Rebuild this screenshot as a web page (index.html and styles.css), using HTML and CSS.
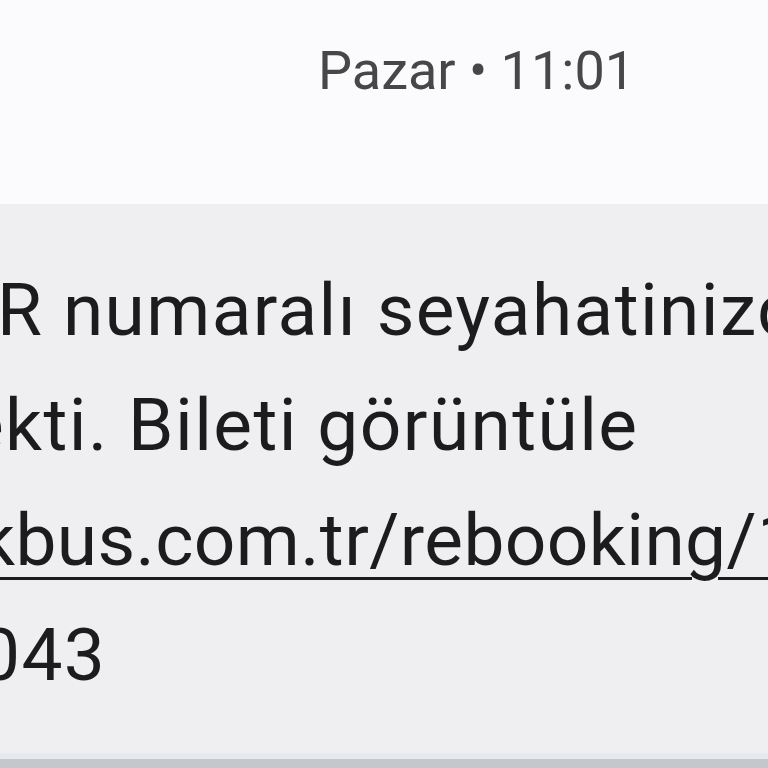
FILE: index.html
```html
<!DOCTYPE html>
<html lang="tr">
<head>
<meta charset="utf-8">
<link rel="stylesheet" href="styles.css">
</head>
<body>
<div class="screen">
  <header class="stamp-row">
    <span class="stamp">Pazar • 11:01</span>
  </header>
  <section class="bubble">
    <div class="line l1">R numaralı seyahatinizde</div>
    <div class="line l2">ekti. Bileti görüntüle</div>
    <div class="line l3"><span class="link">kbus.com.tr/rebooking/1d8f7a2c9b4e6</span></div>
    <div class="line l4">043</div>
  </section>
  <div class="edge"></div>
  <div class="divider"></div>
</div>
</body>
</html>
```
FILE: styles.css
```css
html, body {
  margin: 0;
  padding: 0;
  background: #fbfbfd;
}
.screen {
  width: 768px;
  height: 768px;
  overflow: hidden;
  display: flex;
  flex-direction: column;
  font-family: Roboto, "Noto Sans", sans-serif;
}
.stamp-row {
  height: 204px;
  box-sizing: border-box;
  padding: 36px 0 0 318px;
  flex: none;
}
.stamp {
  font-size: 54px;
  line-height: 70px;
  color: #474747;
  white-space: nowrap;
}
.bubble {
  flex: none;
  height: 549px;
  box-sizing: border-box;
  padding-top: 49px;
  background: #efeff2;
  color: #1c1c1e;
  font-size: 73px;
  letter-spacing: 1.4px;
  line-height: 115px;
  overflow: hidden;
}
.line {
  white-space: nowrap;
}
.l1 { margin-left: -3px; }
.l2 { margin-left: -35px; }
.l3 { margin-left: -22px; letter-spacing: 0.4px; }
.l4 { margin-left: -21px; }
.link {
  text-decoration: underline;
  text-decoration-thickness: 3px;
  text-underline-offset: 12px;
}
.edge {
  flex: none;
  height: 6px;
  background: #e6eaee;
}
.divider {
  flex: 1;
  background: #c5c8cb;
}
```
